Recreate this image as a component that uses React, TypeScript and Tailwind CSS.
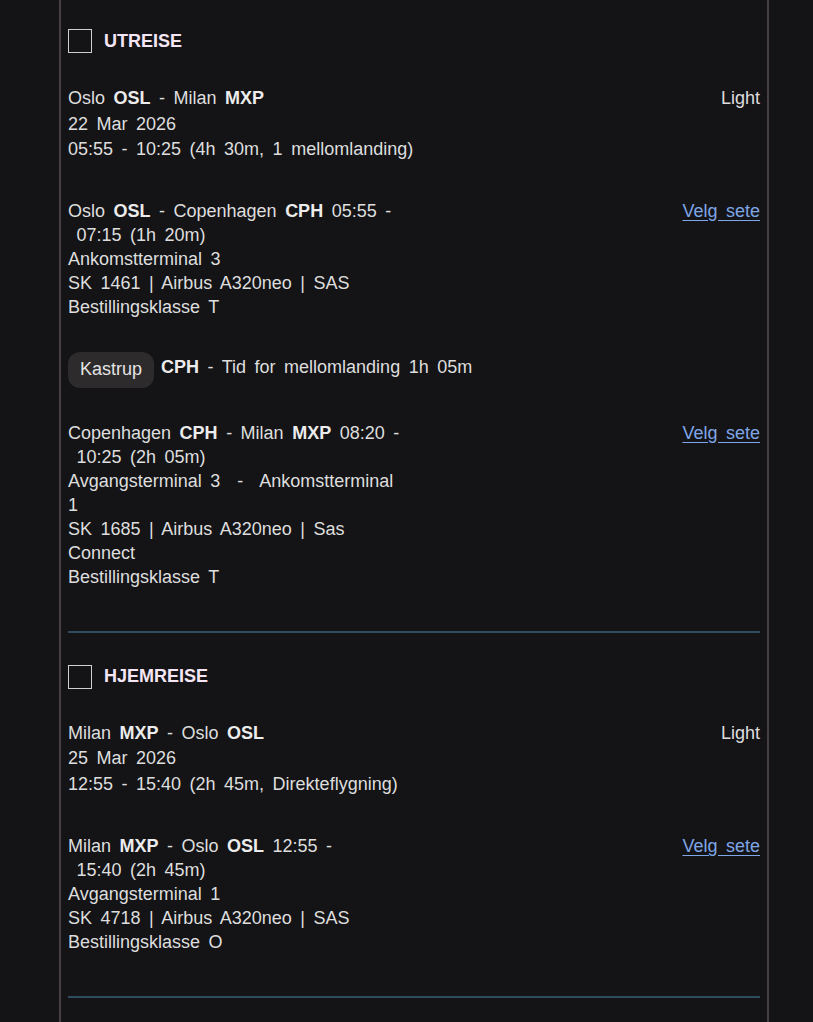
const Bold = ({ children }: { children: React.ReactNode }) => (
    <span className="font-bold text-[#ececec]">{children}</span>
)

const Heading = ({ title }: { title: string }) => (
    <div className="flex items-center gap-[12px] h-[24px]">
        <span className="w-[24px] h-[24px] border border-[#cfcfcf]" />
        <p className="font-bold text-[18px] text-[#f4e6f4] [word-spacing:0px]">{title}</p>
    </div>
)

const Link = () => (
    <a href="#" className="text-[#7fa6e6] underline underline-offset-[3px] whitespace-nowrap">Velg sete</a>
)

const Divider = () => <div className="w-full h-[2px] bg-[#2f4b5f]" />

const App = () => {
    return (
        <div className="w-full min-h-[1022px] bg-[#141416] flex font-['Liberation_Sans',Arial,sans-serif] text-[18px] text-[#dedede] [word-spacing:3.5px]">
            <div className="w-[710px] ml-[59px] border-x-2 border-x-[#463f43] px-[7px] pt-[29px] flex flex-col">
                {/* utreise */}
                <Heading title="UTREISE" />
                <div className="mt-[33px] flex justify-between leading-[25.5px]">
                    <div>
                        <p>Oslo <Bold>OSL</Bold> - Milan <Bold>MXP</Bold></p>
                        <p>22 Mar 2026</p>
                        <p>05:55 - 10:25 (4h 30m, 1 mellomlanding)</p>
                    </div>
                    <p>Light</p>
                </div>

                <div className="mt-[36px] flex justify-between leading-[24px]">
                    <div className="whitespace-pre">
                        <p>Oslo <Bold>OSL</Bold> - Copenhagen <Bold>CPH</Bold> 05:55 -</p>
                        <p> 07:15 (1h 20m)</p>
                        <p>Ankomstterminal 3</p>
                        <p>SK 1461 | Airbus A320neo | SAS</p>
                        <p>Bestillingsklasse T</p>
                    </div>
                    <Link />
                </div>

                <div className="mt-[33px] flex items-center gap-[7px]">
                    <span className="h-[36px] px-[12px] flex items-center rounded-[12px] bg-[#2d2b2b] text-[#e4e4e4]">Kastrup</span>
                    <p className="mb-[4px]"><Bold>CPH</Bold> - Tid for mellomlanding 1h 05m</p>
                </div>

                <div className="mt-[33px] flex justify-between leading-[24px]">
                    <div className="whitespace-pre">
                        <p>Copenhagen <Bold>CPH</Bold> - Milan <Bold>MXP</Bold> 08:20 -</p>
                        <p> 10:25 (2h 05m)</p>
                        <p>Avgangsterminal 3  -  Ankomstterminal</p>
                        <p>1</p>
                        <p>SK 1685 | Airbus A320neo | Sas</p>
                        <p>Connect</p>
                        <p>Bestillingsklasse T</p>
                    </div>
                    <Link />
                </div>

                <div className="mt-[42px]"><Divider /></div>

                {/* hjemreise */}
                <div className="mt-[32px]"><Heading title="HJEMREISE" /></div>
                <div className="mt-[32px] flex justify-between leading-[25.5px]">
                    <div>
                        <p>Milan <Bold>MXP</Bold> - Oslo <Bold>OSL</Bold></p>
                        <p>25 Mar 2026</p>
                        <p>12:55 - 15:40 (2h 45m, Direkteflygning)</p>
                    </div>
                    <p>Light</p>
                </div>

                <div className="mt-[37px] flex justify-between leading-[24px]">
                    <div className="whitespace-pre">
                        <p>Milan <Bold>MXP</Bold> - Oslo <Bold>OSL</Bold> 12:55 -</p>
                        <p> 15:40 (2h 45m)</p>
                        <p>Avgangsterminal 1</p>
                        <p>SK 4718 | Airbus A320neo | SAS</p>
                        <p>Bestillingsklasse O</p>
                    </div>
                    <Link />
                </div>

                <div className="mt-[42px]"><Divider /></div>
            </div>
        </div>
    )
}

export default App
